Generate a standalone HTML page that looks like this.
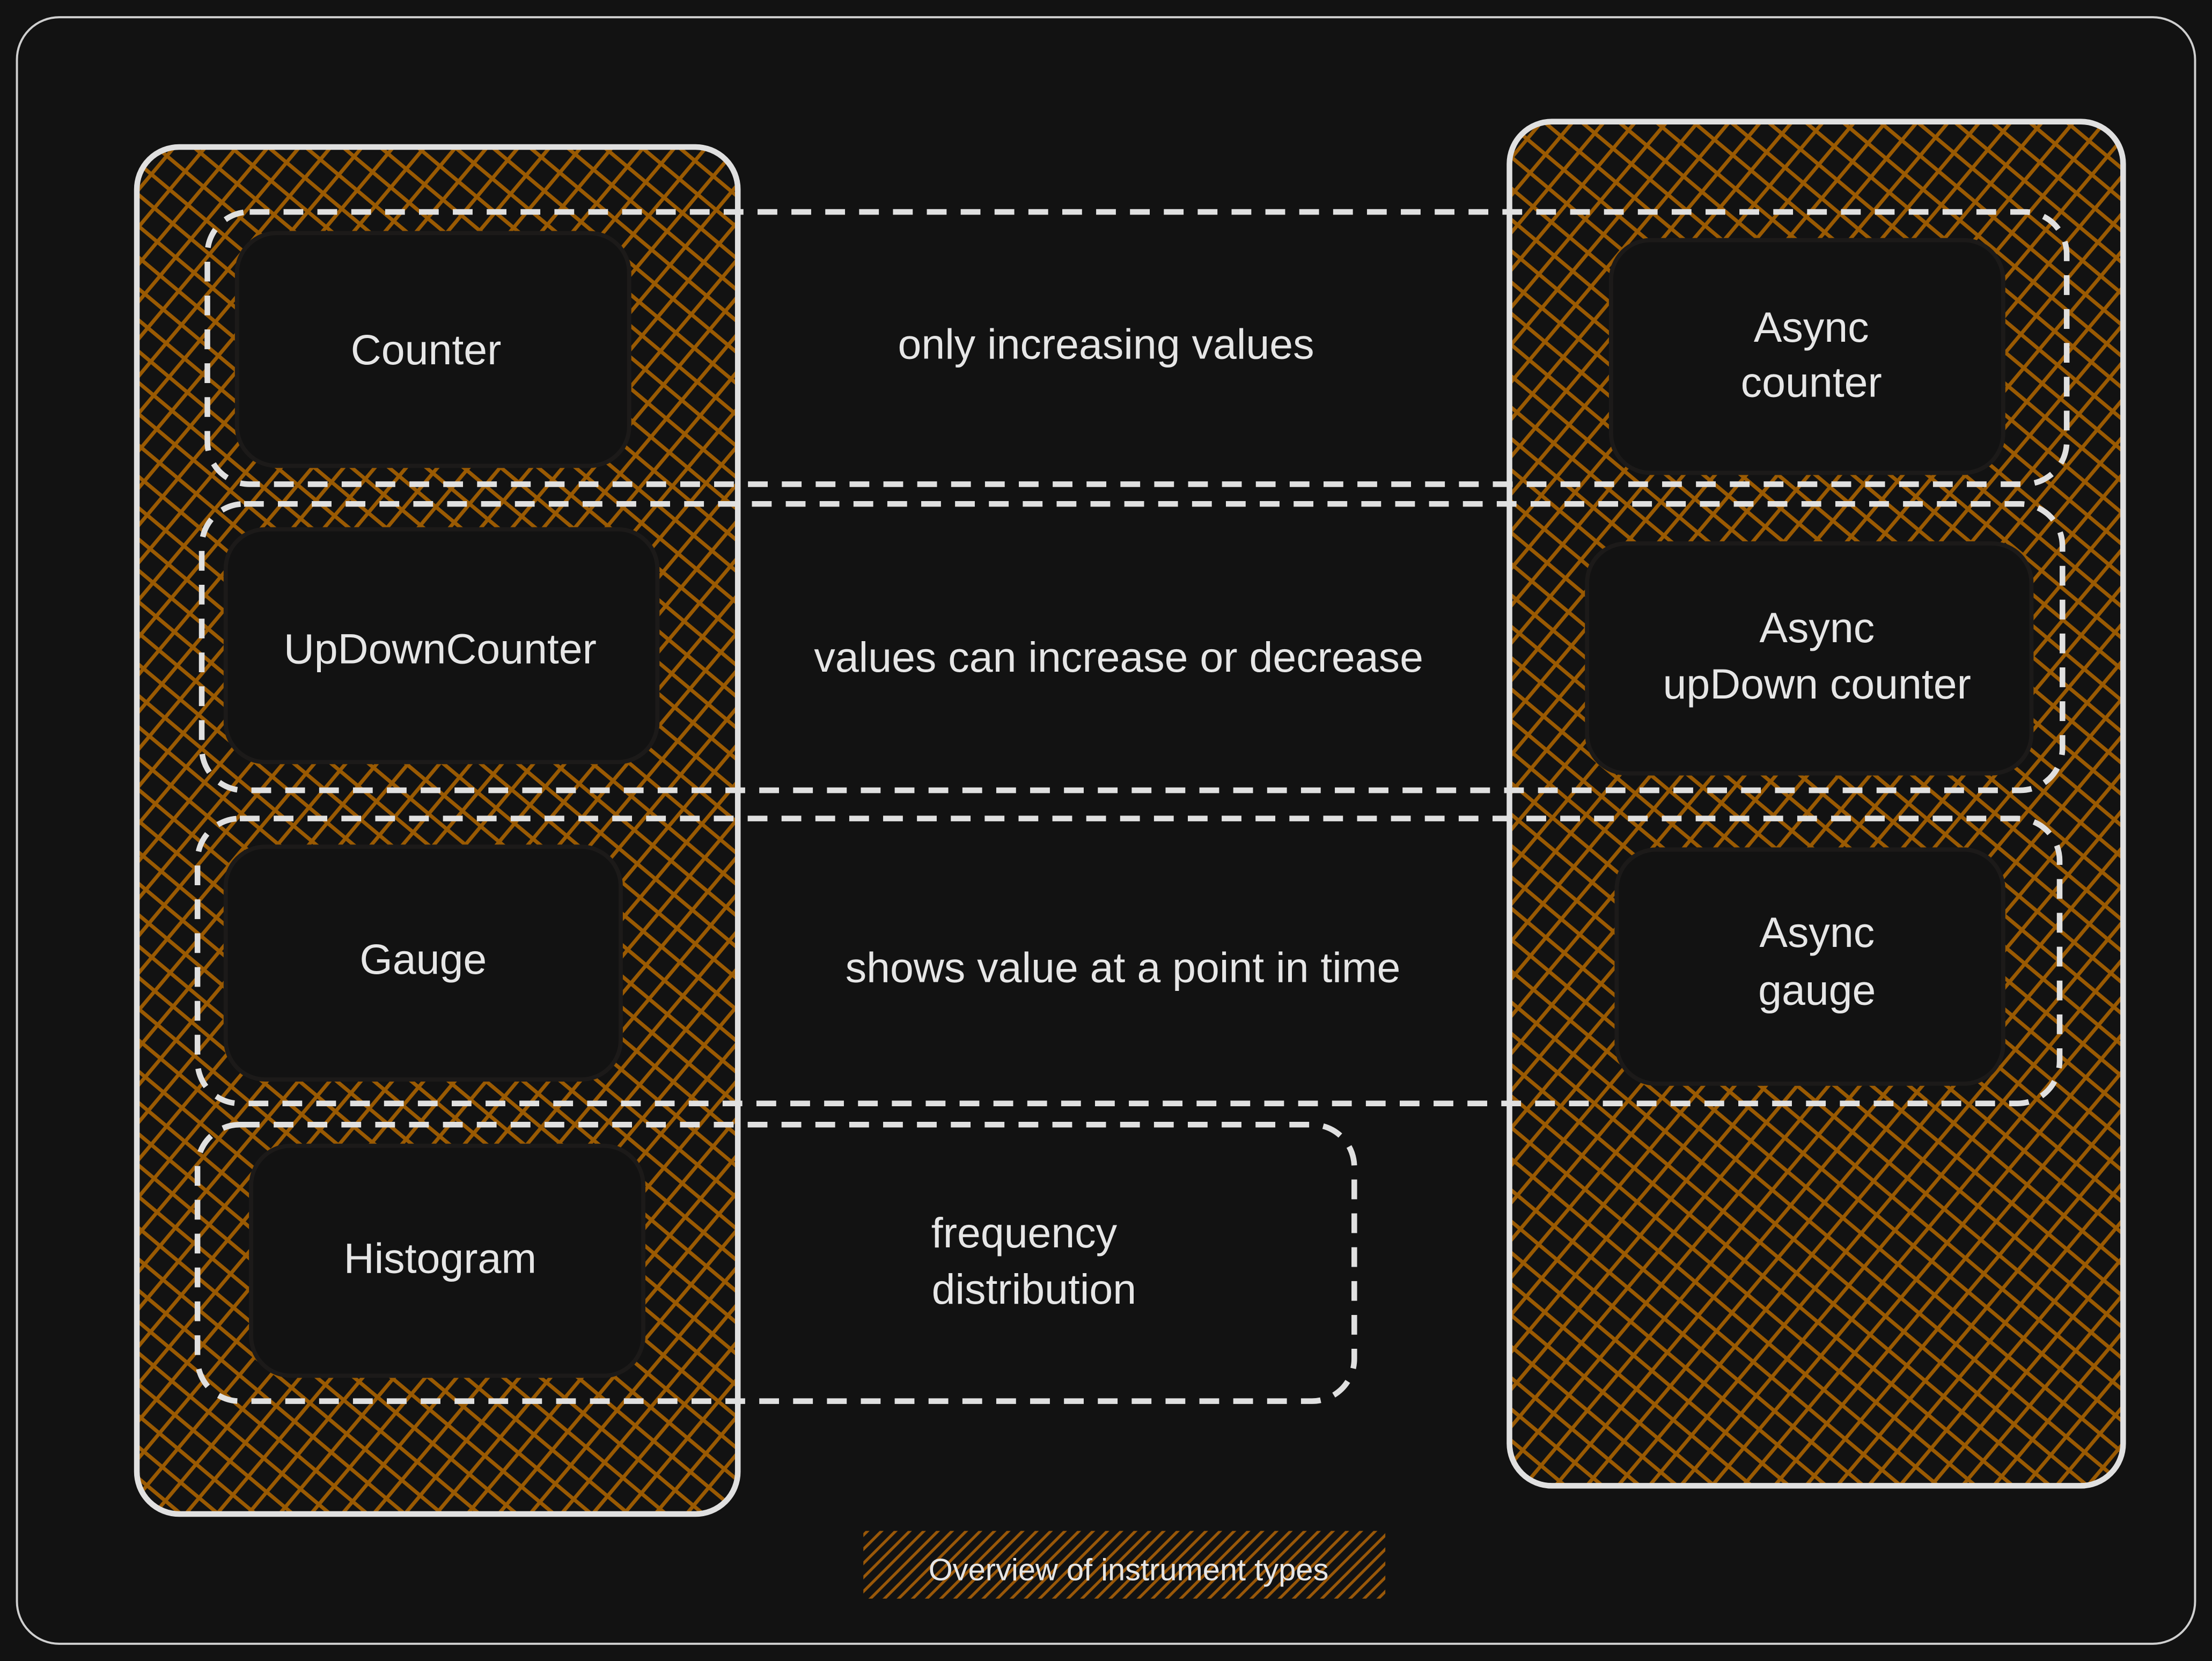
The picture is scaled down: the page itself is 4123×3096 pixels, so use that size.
<!DOCTYPE html>
<html><head><meta charset="utf-8"><style>
html,body{margin:0;padding:0;background:#121212;}
svg{display:block;}
text{font-family:"Liberation Sans",sans-serif;fill:#e6e6e6;text-anchor:middle;}
</style></head><body>
<svg width="4123" height="3096" viewBox="0 0 1568 1177" xmlns="http://www.w3.org/2000/svg">
<defs>
<pattern id="h" width="17" height="17" patternUnits="userSpaceOnUse" patternTransform="rotate(40)">
<path d="M0 8.5H17M8.5 0V17" stroke="#9a5a02" stroke-width="2.6"/>
</pattern>
<pattern id="d" width="10" height="10" patternUnits="userSpaceOnUse">
<path d="M0 10L10 0M-5 5L5 -5M5 15L15 5" stroke="#9a5808" stroke-width="2"/>
</pattern>
</defs>
<rect width="1568" height="1177" fill="#121212"/>
<rect x="12" y="12" width="1544" height="1153" rx="30" fill="none" stroke="#cfcfcf" stroke-width="1.5"/>
<rect x="97" y="104" width="426" height="969" rx="30" fill="url(#h)" stroke="#e0e0e0" stroke-width="4"/>
<rect x="1070" y="86" width="435" height="967" rx="30" fill="url(#h)" stroke="#e0e0e0" stroke-width="4"/>
<g fill="#121212" stroke="#1c1a19" stroke-width="3">
<rect x="168" y="165" width="278" height="165" rx="28"/>
<rect x="160" y="375" width="306" height="165" rx="28"/>
<rect x="160" y="600" width="280" height="165" rx="28"/>
<rect x="178" y="812" width="278" height="163" rx="28"/>
<rect x="1142" y="170" width="278" height="165" rx="28"/>
<rect x="1125" y="385" width="315" height="163" rx="28"/>
<rect x="1146" y="602" width="274" height="166" rx="28"/>
</g>
<g fill="none" stroke="#e0e0e0" stroke-width="4" stroke-dasharray="14 10">
<rect x="147" y="150" width="1318" height="193" rx="30"/>
<rect x="143" y="357" width="1319" height="203" rx="30"/>
<rect x="140" y="580" width="1320" height="202" rx="30"/>
<rect x="140" y="797" width="820" height="196" rx="30"/>
</g>
<g font-size="30">
<text x="302" y="258">Counter</text>
<text x="312" y="470">UpDownCounter</text>
<text x="300" y="690">Gauge</text>
<text x="312" y="902">Histogram</text>
<text x="784" y="254">only increasing values</text>
<text x="793" y="476">values can increase or decrease</text>
<text x="796" y="696">shows value at a point in time</text>
<text x="726" y="884">frequency</text>
<text x="733" y="924">distribution</text>
<text x="1284" y="242">Async</text>
<text x="1284" y="281">counter</text>
<text x="1288" y="455">Async</text>
<text x="1288" y="495">upDown counter</text>
<text x="1288" y="671">Async</text>
<text x="1288" y="712">gauge</text>
</g>
<rect x="612" y="1085" width="370" height="48" fill="url(#d)"/>
<text x="800" y="1120" font-size="22">Overview of instrument types</text>
</svg>
</body></html>
